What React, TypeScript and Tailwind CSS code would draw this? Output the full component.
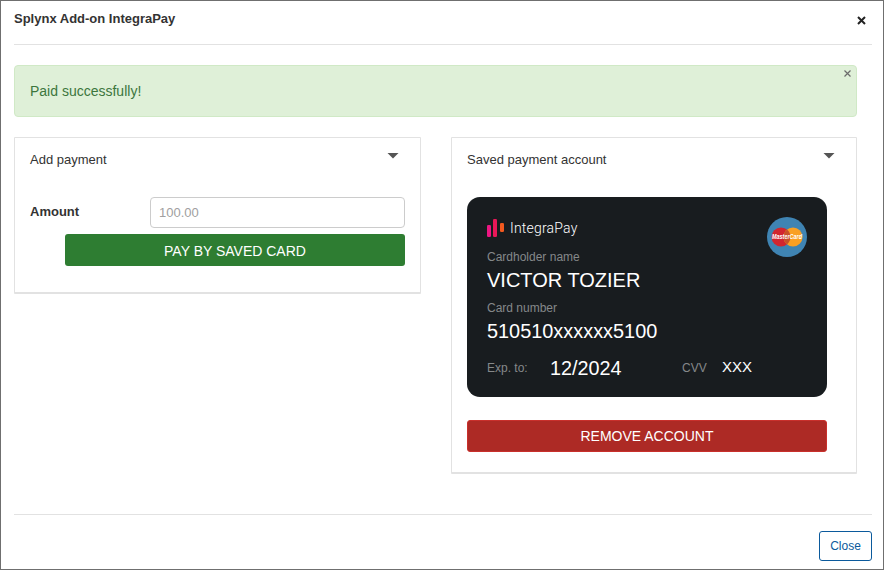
import React from 'react';

const labelFont = "font-['Liberation_Sans',Arial,sans-serif]";

const Caret = () => (
  <svg width="12" height="6" viewBox="0 0 12 6" className="block">
    <path d="M0.5 0h11L6 5.5z" fill="#555" />
  </svg>
);

const MasterCardBadge = () => (
  <svg width="40" height="40" viewBox="0 0 40 40" className="block">
    <circle cx="20" cy="20" r="20" fill="#3f84b3" />
    <circle cx="14" cy="20" r="9.5" fill="#d2262f" />
    <circle cx="26" cy="20" r="9.5" fill="#f9a023" />
    <path d="M20 12.6a9.5 9.5 0 0 1 0 14.8a9.5 9.5 0 0 1 0-14.8z" fill="#c8502a" />
    <text
      x="20"
      y="22"
      textAnchor="middle"
      fontSize="6.4"
      fontWeight="700"
      fontStyle="italic"
      fill="#fff"
      fontFamily="'Liberation Sans', Arial, sans-serif"
      textLength="30"
      lengthAdjust="spacingAndGlyphs"
    >
      MasterCard
    </text>
  </svg>
);

const IntegraLogo = () => (
  <svg width="18" height="20" viewBox="0 0 18 20" className="block">
    <rect x="0" y="7" width="4" height="12" rx="1.2" fill="#ec1682" />
    <rect x="6" y="1" width="4" height="18" rx="1.2" fill="#ea1758" />
    <rect x="13" y="5" width="4" height="9" rx="1.2" fill="#f2591f" />
  </svg>
);

const PanelHeader = ({ title }: { title: string }) => (
  <div className="flex justify-between pl-[15px] pr-[21px] h-[44px]">
    <span className="text-[13px] leading-[15px] text-[#333] pt-[14px]">{title}</span>
    <span className="pt-[15px]">
      <Caret />
    </span>
  </div>
);

export default function App() {
  return (
    <div className={`${labelFont} w-[884px] h-[570px] bg-white border border-[#6f6f6f] flex flex-col overflow-hidden text-[#333]`}>
      {/* header */}
      <div className="mx-[13px] w-[858px] h-[44px] border-b border-[#e2e2e2] flex justify-between shrink-0">
        <h4 className="text-[13px] leading-[15px] font-bold pt-[10px] text-[#333]">Splynx Add-on IntegraPay</h4>
        <button className="text-[#222] pt-[15px] pr-[6px] h-fit">
          <svg width="9" height="9" viewBox="0 0 9 9" className="block">
            <path d="M1 1l7 7M8 1l-7 7" stroke="#222" strokeWidth="2" />
          </svg>
        </button>
      </div>

      {/* body */}
      <div className="px-[13px] pt-[20px] flex-1">
        <div className="relative w-[843px] h-[52px] bg-[#dff0d8] border border-[#d0e9c6] rounded-[4px] pl-[15px] pt-[17px]">
          <span className="text-[14px] leading-[17px] text-[#3c763d] block">Paid successfully!</span>
          <svg width="7" height="7" viewBox="0 0 7 7" className="absolute right-[5px] top-[4px]">
            <path d="M.5.5l6 6M6.5.5l-6 6" stroke="#6b6b6b" strokeWidth="1.2" />
          </svg>
        </div>

        <div className="flex items-start gap-[30px] mt-[20px]">
          {/* add payment */}
          <div className="w-[407px] h-[157px] border border-[#e2e2e2] border-b-[2px] rounded-[1px] bg-white">
            <PanelHeader title="Add payment" />
            <div className="pl-[15px] pr-[15px] pt-[15px]">
              <div className="flex justify-between">
                <label className="text-[13px] leading-[15px] font-bold pt-[7px]">Amount</label>
                <input
                  readOnly
                  placeholder="100.00"
                  className={`${labelFont} w-[255px] h-[31px] border border-[#cccccc] rounded-[4px] px-[8px] text-[13px] text-[#777] placeholder:text-[#a0a0a0] bg-white outline-none`}
                />
              </div>
              <button className="block ml-[35px] mt-[6px] w-[340px] h-[32px] rounded-[3px] bg-[#2e7d32] text-white text-[14px] leading-[34px] text-center">
                PAY BY SAVED CARD
              </button>
            </div>
          </div>

          {/* saved card */}
          <div className="w-[406px] h-[337px] border border-[#e2e2e2] border-b-[2px] rounded-[1px] bg-white">
            <PanelHeader title="Saved payment account" />
            <div className="px-[15px] pt-[15px]">
              <div className="w-[360px] h-[200px] rounded-[13px] bg-[#181c1f] pl-[20px] pr-[20px] pt-[20px] text-white">
                <div className="flex justify-between items-start">
                  <div>
                    <div className="flex items-center gap-[5px] h-[22px]">
                      <IntegraLogo />
                      <span className="font-['Roboto',Arial,sans-serif] font-light text-[14px] leading-[20px] tracking-[0.2px] text-white">IntegraPay</span>
                    </div>
                    <div className="text-[12px] leading-[14px] text-[#85888a] mt-[11px]">Cardholder name</div>
                    <div className="text-[20px] leading-[24px] text-white mt-[4px]">VICTOR TOZIER</div>
                  </div>
                  <MasterCardBadge />
                </div>
                <div className="text-[12px] leading-[14px] text-[#85888a] mt-[9px]">Card number</div>
                <div className="text-[19.9px] leading-[24px] text-white mt-[4px]">510510xxxxxx5100</div>
                <div className="flex items-center mt-[12px] h-[26px]">
                  <span className="text-[12px] text-[#85888a] w-[63px]">Exp. to:</span>
                  <span className="text-[19.8px] leading-[24px] w-[132px]">12/2024</span>
                  <span className="text-[12px] text-[#85888a] w-[40px]">CVV</span>
                  <span className="text-[15px] leading-[20px] -mt-[3px] font-medium">XXX</span>
                </div>
              </div>
              <button className="block mt-[23px] w-[360px] h-[32px] rounded-[3px] bg-[#ad2a25] border border-[#c9302c] text-white text-[14px] leading-[30px] text-center">
                REMOVE ACCOUNT
              </button>
            </div>
          </div>
        </div>
      </div>

      {/* footer */}
      <div className="mx-[13px] w-[858px] h-[55px] border-t border-[#e2e2e2] flex justify-end items-start pt-[16px] shrink-0">
        <button className="w-[53px] h-[30px] border border-[#0b5a9c] rounded-[3px] bg-white text-[#0b5a9c] text-[12px]">Close</button>
      </div>
    </div>
  );
}
